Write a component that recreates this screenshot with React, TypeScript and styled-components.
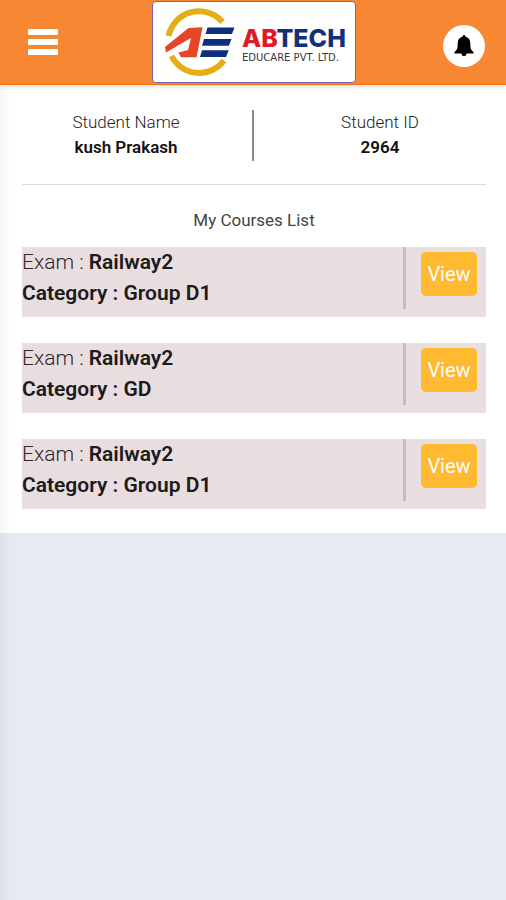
import React from "react";
import styled, { createGlobalStyle } from "styled-components";

const GlobalStyle = createGlobalStyle`
  * { box-sizing: border-box; }
  body {
    margin: 0;
    background: #e8ebf4;
    color: #1c1a1b;
    font-family: Roboto, "Liberation Sans", sans-serif;
  }
  h1, h2, p, dl, dd, ul { margin: 0; padding: 0; }
`;

const Page = styled.div`
  min-height: 100vh;
  background: linear-gradient(to right, #e0e4ea, #e8ebf4 24px);
`;

const Header = styled.header`
  position: relative;
  display: grid;
  grid-template-columns: 1fr auto 1fr;
  align-items: center;
  height: 85px;
  padding: 0 21px 0 22px;
  background: #f78733;
  border-bottom: 1px solid #ee7613;
  box-shadow: 0 1px 5px rgba(0, 0, 0, 0.18);
`;

const MenuButton = styled.button`
  display: flex;
  flex-direction: column;
  justify-self: start;
  gap: 4px;
  padding: 0 6px;
  border: 0;
  background: none;
  cursor: pointer;
`;

const MenuBar = styled.span`
  width: 30px;
  height: 6px;
  border-radius: 1px;
  background: #fff;
`;

const LogoCard = styled.a`
  display: flex;
  width: 204px;
  height: 82px;
  border: 1px solid #7b62a8;
  border-radius: 4px;
  background: #fff;
`;

const BellButton = styled.button`
  display: grid;
  place-items: center;
  justify-self: end;
  width: 42px;
  height: 42px;
  margin-top: 8px;
  padding: 0;
  border: 0;
  border-radius: 50%;
  background: #fff;
  cursor: pointer;
`;

const Content = styled.main`
  padding: 25px 20px 24px 22px;
  background: linear-gradient(to right, #f7f7f7, #fff 12px);
`;

const Student = styled.dl`
  display: grid;
  grid-template-columns: 1fr 1fr;
  padding-bottom: 23px;
  border-bottom: 1px solid #dcdcdc;
`;

const Field = styled.div<{ $divided?: boolean }>`
  height: 51px;
  padding-right: ${(p) => (p.$divided ? "22px" : "0")};
  padding-left: ${(p) => (p.$divided ? "0" : "20px")};
  border-right: ${(p) => (p.$divided ? "2px solid #8a8a8a" : "0")};
  font-size: 17px;
  line-height: 25px;
  text-align: center;
`;

const Label = styled.dt`
  color: #222;
  font-weight: 300;
`;

const Value = styled.dd`
  color: #111;
  font-weight: 600;
`;

const Title = styled.h1`
  margin: 23px 0 14px;
  color: #444;
  font-size: 17px;
  font-weight: 400;
  line-height: 25px;
  text-align: center;
`;

const Courses = styled.ul`
  display: flex;
  flex-direction: column;
  gap: 26px;
  list-style: none;
`;

const Course = styled.li`
  display: flex;
  height: 70px;
  padding-right: 9px;
  background: #e9dedf;
`;

const Details = styled.div`
  flex: 1;
  height: 62px;
  margin-right: 15px;
  border-right: 3px solid #c6bcbd;
  font-size: 21px;
  line-height: 31px;
`;

const Exam = styled.p`
  color: #2c2829;
  font-weight: 300;

  strong { color: #1c1a1b; font-weight: 600; }
`;

const Category = styled.p`
  font-weight: 600;
`;

const ViewButton = styled.button`
  width: 56px;
  height: 44px;
  margin-top: 5px;
  padding: 0;
  border: 0;
  border-radius: 5px;
  background: #ffba31;
  color: #fff;
  font: 400 20px Roboto, sans-serif;
  cursor: pointer;
`;

const courses = [
  { id: 1, exam: "Railway2", category: "Group D1" },
  { id: 2, exam: "Railway2", category: "GD" },
  { id: 3, exam: "Railway2", category: "Group D1" },
];

function Logo() {
  return (
    <svg width="202" height="80" viewBox="0 0 202 80" role="img" aria-label="Abtech Educare Pvt. Ltd.">
      <g fill="none" stroke="#e5ae16" strokeWidth="6">
        <path d="M15.600 34 A31 31 0 0 1 69.500 20" />
        <path d="M18.500 54 A31 31 0 0 0 71 58.500" />
      </g>
      <path fill="#e64527" d="M12 45 L35.500 26 L49.500 25.300 L43.500 55.300 H28 L25.500 50.500 L35 48 L38 36 L13 50.500Z" />
      <g fill="#0d2f7c">
        <path d="M54.500 25.500 H81.500 L79 32 H52.500Z" />
        <path d="M51 37 H78.500 L76 43.700 H49Z" />
        <path d="M49 48.200 H75.700 L73 55 H47Z" />
      </g>
      <text x="89" y="45" fontFamily="Inter, sans-serif" fontSize="25" fontWeight="800" fill="#123077">
        <tspan fill="#e01a28">AB</tspan>TECH
      </text>
      <text x="89" y="59" fontFamily="DejaVu Sans, sans-serif" fontSize="10" fill="#38383c">
        EDUCARE PVT. LTD.
      </text>
    </svg>
  );
}

function Bell() {
  return (
    <svg width="20" height="22" viewBox="0 0 20 22" aria-hidden="true">
      <path d="M10 0 C9 0 8.500.8 8.500 1.700 C5.500 2.400 4 4.500 3.800 7.500 L3.500 12 C3.300 14 2.500 15.500.5 17 V18.500 H19.500 V17 C17.500 15.500 16.700 14 16.500 12 L16.200 7.500 C16 4.500 14.500 2.400 11.500 1.700 C11.500.8 11 0 10 0Z M7.500 18.500 C7.500 22 12.500 22 12.500 18.500Z" />
    </svg>
  );
}

export default function App() {
  return (
    <Page>
      <GlobalStyle />
      <Header>
        <MenuButton aria-label="Menu">
          <MenuBar />
          <MenuBar />
          <MenuBar />
        </MenuButton>
        <LogoCard href="#">
          <Logo />
        </LogoCard>
        <BellButton aria-label="Notifications">
          <Bell />
        </BellButton>
      </Header>
      <Content>
        <Student>
          <Field $divided>
            <Label>Student Name</Label>
            <Value>kush Prakash</Value>
          </Field>
          <Field>
            <Label>Student ID</Label>
            <Value>2964</Value>
          </Field>
        </Student>
        <Title>My Courses List</Title>
        <Courses>
          {courses.map((course) => (
            <Course key={course.id}>
              <Details>
                <Exam>
                  Exam : <strong>{course.exam}</strong>
                </Exam>
                <Category>Category : {course.category}</Category>
              </Details>
              <ViewButton>View</ViewButton>
            </Course>
          ))}
        </Courses>
      </Content>
    </Page>
  );
}
